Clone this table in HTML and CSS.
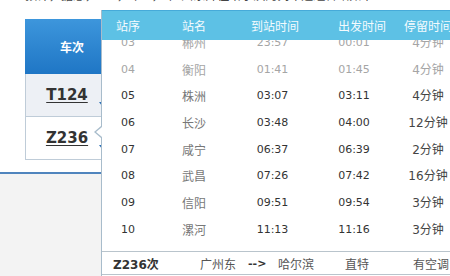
FILE: index.html
```html
<!DOCTYPE html>
<html lang="zh-CN">
<head>
<meta charset="utf-8">
<title>Z236次 停靠站</title>
<link rel="stylesheet" href="styles.css">
</head>
<body>
<div class="page">
  <div class="caption"><span>预计，据悉，  二 ，  广  ，  广州东开往哈尔滨的列车途经各站如下：</span></div>
  <div class="trains">
    <div class="trains-head">车次</div>
    <div class="train-row alt"><a class="train-no">T124</a></div>
    <div class="train-row"><a class="train-no">Z236</a></div>
  </div>
  <div class="spacer"></div>
  <div class="divider"></div>
  <div class="lower"></div>

  <div class="popover">
    <div class="pop-head cols">
      <div>站序</div>
      <div>站名</div>
      <div>到站时间</div>
      <div class="h-dep">出发时间</div>
      <div>停留时间</div>
    </div>
    <div class="pop-body">
      <div class="pop-list">
        <div class="stop cols passed"><div class="no">03</div><div class="name">郴州</div><div class="arr">23:57</div><div class="dep">00:01</div><div class="dwell">4分钟</div></div>
        <div class="stop cols passed"><div class="no">04</div><div class="name">衡阳</div><div class="arr">01:41</div><div class="dep">01:45</div><div class="dwell">4分钟</div></div>
        <div class="stop cols"><div class="no">05</div><div class="name">株洲</div><div class="arr">03:07</div><div class="dep">03:11</div><div class="dwell">4分钟</div></div>
        <div class="stop cols"><div class="no">06</div><div class="name">长沙</div><div class="arr">03:48</div><div class="dep">04:00</div><div class="dwell">12分钟</div></div>
        <div class="stop cols"><div class="no">07</div><div class="name">咸宁</div><div class="arr">06:37</div><div class="dep">06:39</div><div class="dwell">2分钟</div></div>
        <div class="stop cols"><div class="no">08</div><div class="name">武昌</div><div class="arr">07:26</div><div class="dep">07:42</div><div class="dwell">16分钟</div></div>
        <div class="stop cols"><div class="no">09</div><div class="name">信阳</div><div class="arr">09:51</div><div class="dep">09:54</div><div class="dwell">3分钟</div></div>
        <div class="stop cols"><div class="no">10</div><div class="name">漯河</div><div class="arr">11:13</div><div class="dep">11:16</div><div class="dwell">3分钟</div></div>
      </div>
    </div>
    <div class="pop-foot">
      <span class="f-train">Z236次</span>
      <span>广州东</span>
      <span class="f-arrow">--&gt;</span>
      <span>哈尔滨</span>
      <span>直特</span>
      <span>有空调</span>
    </div>
  </div>
</div>
</body>
</html>
```
FILE: styles.css
```css
* {
  box-sizing: border-box;
  margin: 0;
  padding: 0;
}

body {
  margin: 0;
  width: 450px;
  height: 276px;
  overflow: hidden;
  background: #fff;
  font-family: "Noto Sans CJK SC", "Noto Sans", sans-serif;
  color: #333;
}

.page {
  position: relative;
  height: 276px;
  display: flex;
  flex-direction: column;
}

.caption {
  height: 19px;
  overflow: hidden;
  padding-left: 25px;
  font-size: 12px;
  line-height: 12px;
  color: #444;
  white-space: pre;
}

.caption span {
  display: block;
  margin-top: -11px;
}

.trains {
  margin-left: 25px;
  width: 94px;
}

.trains-head {
  height: 55px;
  background: linear-gradient(#3d96dc, #1f76c5);
  color: #fff;
  font-weight: bold;
  font-size: 12px;
  display: flex;
  align-items: center;
  justify-content: center;
}

.train-row {
  position: relative;
  height: 43px;
  border: 1px solid #bfccd8;
  border-top: 0;
  display: flex;
  align-items: center;
  justify-content: center;
  padding-right: 10px;
  background: #fff;
}

.train-row.alt {
  background: #edf0f5;
}

.train-row::after {
  content: "";
  position: absolute;
  left: 73px;
  top: 28px;
  border-left: 3px solid transparent;
  border-top: 4px solid #2a6fb5;
  border-right: 2px solid transparent;
}

.train-no {
  font-family: "DejaVu Sans", sans-serif;
  font-weight: bold;
  font-size: 15px;
  color: #333;
  text-decoration: underline;
  text-underline-offset: 2px;
}

.spacer {
  height: 12px;
}

.divider {
  height: 2px;
  background: #4f84bd;
}

.lower {
  flex: 1;
  background: #f3f3f3;
}

.popover {
  position: absolute;
  left: 101px;
  top: 10px;
  bottom: 0;
  width: 360px;
  background: #fff;
  border-left: 1px solid #a8bccb;
  display: flex;
  flex-direction: column;
}

.popover::before {
  content: "";
  position: absolute;
  left: -8px;
  top: 116px;
  border-top: 6px solid transparent;
  border-bottom: 6px solid transparent;
  border-right: 7px solid #a8bccb;
}

.popover::after {
  content: "";
  position: absolute;
  left: -6px;
  top: 117px;
  border-top: 5px solid transparent;
  border-bottom: 5px solid transparent;
  border-right: 6px solid #fff;
}

.cols {
  display: grid;
  grid-template-columns: 52px 80px 82px 76px 72px;
  align-items: center;
  text-align: center;
}

.pop-head {
  height: 30px;
  background: #5dc1e5;
  border-top: 1px solid #46aad9;
  color: #f4fbfe;
  font-size: 12px;
  white-space: nowrap;
}

.h-dep {
  padding-left: 16px;
}

.pop-body {
  height: 211px;
  overflow: hidden;
}

.pop-list {
  margin-top: -10px;
}

.stop {
  height: 26.7px;
  line-height: 26.7px;
  color: #333;
}

.no,
.arr,
.dep {
  font-family: "DejaVu Sans", sans-serif;
  font-size: 11px;
}

.arr {
  padding-right: 5px;
}

.name {
  font-size: 12px;
  color: #777;
}

.dwell {
  font-family: "DejaVu Sans", "Noto Sans CJK SC", sans-serif;
  font-size: 12px;
  color: #444;
}

.stop.passed div {
  color: #a5a5a5;
}

.pop-foot {
  height: 24px;
  border-top: 1px solid #b9c4cc;
  border-bottom: 1px solid #b9c4cc;
  display: grid;
  grid-template-columns: 87px 48px 30px 67px 68px auto;
  align-items: center;
  padding-left: 11px;
  font-size: 12px;
  color: #555;
  white-space: nowrap;
}

.f-train {
  font-family: "DejaVu Sans", "Noto Sans CJK SC", sans-serif;
  font-weight: bold;
  color: #333;
}

.f-arrow {
  font-family: "DejaVu Sans", sans-serif;
  font-weight: bold;
  font-size: 11px;
  color: #333;
}
```
